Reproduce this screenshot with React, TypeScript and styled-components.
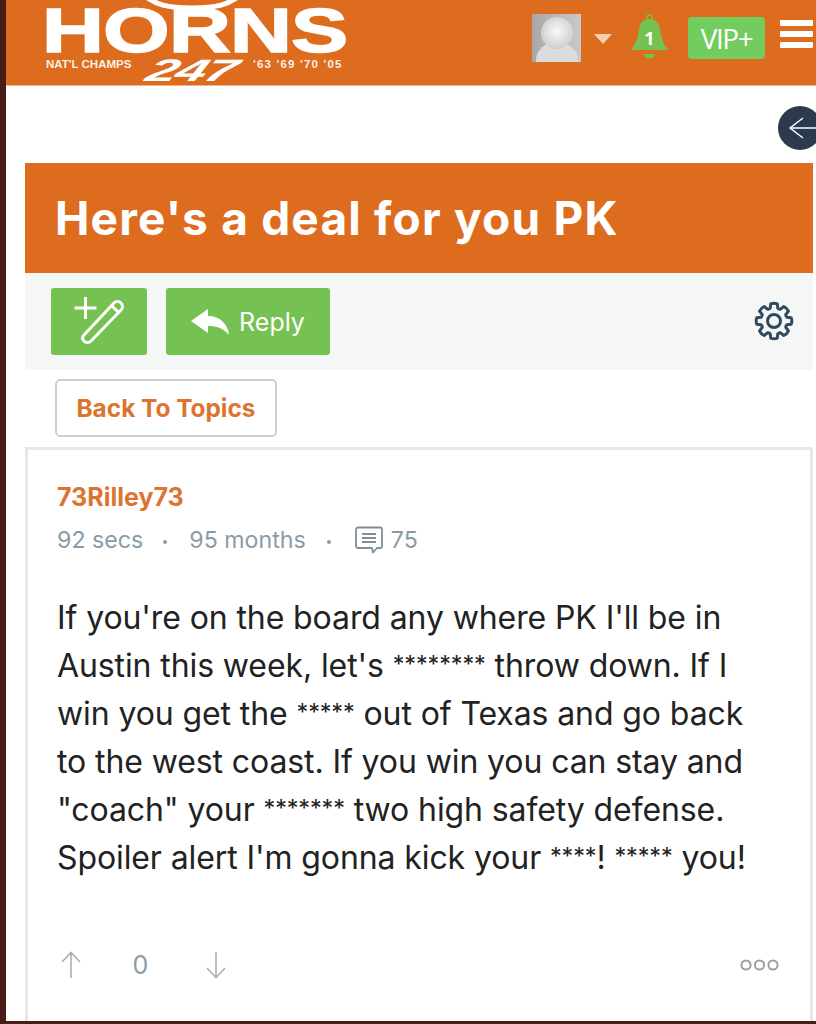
import React from "react";
import styled, { createGlobalStyle } from "styled-components";

const orange = "#de6c1f";
const green = "#75c252";
const grey = "#8a9ba8";

const Global = createGlobalStyle`
  html, body { margin: 0; padding: 0; background: #fff; }
  body { font-family: Inter, "Open Sans", sans-serif; }
  #root { width: 816px; height: 1024px; overflow: hidden; }
`;

const Page = styled.div`
  width: 816px;
  height: 1024px;
  box-sizing: border-box;
  border-left: 6px solid #4a1c17;
  border-bottom: 3px solid #4a1c17;
  overflow: hidden;
  background: #fff;
  display: flex;
  flex-direction: column;
`;

const Header = styled.header`
  flex: none;
  height: 86px;
  box-sizing: border-box;
  background: ${orange};
  border-bottom: 1px solid #eeb48a;
  display: flex;
  align-items: flex-start;
  padding-left: 40px;
`;

const Logo = styled.div`
  position: relative;
  width: 300px;
  height: 85px;
  color: #fff;
  display: flex;
  flex-direction: column;
`;

const Horn = styled.svg`
  position: absolute;
  left: 96px;
  top: 0;
`;

const Word = styled.div`
  font-family: "Liberation Sans", Arial, sans-serif;
  font-weight: 700;
  font-size: 63px;
  line-height: 45px;
  height: 45px;
  margin: 8px 0 0 -4px;
  white-space: nowrap;
  transform-origin: left center;
  transform: scaleX(1.36);
  letter-spacing: -0.6px;
  -webkit-text-stroke: 1.5px #fff;
`;

const LogoRow = styled.div`
  display: flex;
  align-items: flex-start;
  height: 26px;
  margin-top: 5px;
`;

const Tiny = styled.span<{ $w: number; $s: number }>`
  font-family: "Liberation Sans", Arial, sans-serif;
  font-weight: 700;
  font-size: 11.5px;
  line-height: 13px;
  width: ${(p) => p.$w}px;
  letter-spacing: ${(p) => p.$s}px;
  white-space: nowrap;
  opacity: 0.9;
`;

const Num = styled.span`
  font-family: "Liberation Sans", Arial, sans-serif;
  font-weight: 700;
  font-style: italic;
  font-size: 31px;
  line-height: 26px;
  width: 105px;
  white-space: nowrap;
  transform-origin: left center;
  transform: scaleX(1.78) skewX(-14deg);
  letter-spacing: -1px;
`;

const HeaderRight = styled.div`
  margin-left: auto;
  display: flex;
  align-items: flex-start;
  padding-right: 3px;
`;

const Avatar = styled.div`
  width: 49px;
  height: 48px;
  margin-top: 14px;
  background: #bdbdbd;
  overflow: hidden;
  flex: none;
`;

const Caret = styled.div`
  width: 0;
  height: 0;
  border-left: 9px solid transparent;
  border-right: 9px solid transparent;
  border-top: 10px solid #f8cfb3;
  margin: 34px 18px 0 13px;
`;

const Bell = styled.svg`
  margin-top: 14px;
  flex: none;
`;

const Vip = styled.div`
  width: 77px;
  height: 42px;
  margin: 17px 15px 0 19px;
  background: #72cc5e;
  border-radius: 4px;
  color: #fff;
  font-family: "Open Sans", sans-serif;
  font-size: 28px;
  letter-spacing: -1.5px;
  display: flex;
  align-items: center;
  justify-content: center;
`;

const Burger = styled.div`
  width: 33px;
  height: 28px;
  margin-top: 20px;
  display: flex;
  flex-direction: column;
  justify-content: space-between;
  span {
    display: block;
    height: 6px;
    background: #fff;
    border-radius: 1px;
  }
`;

const BackRow = styled.div`
  flex: none;
  height: 77px;
  display: flex;
  justify-content: flex-end;
  align-items: center;
`;

const BackCircle = styled.div`
  width: 44px;
  height: 44px;
  border-radius: 50%;
  background: #2b3a4c;
  margin-right: -6px;
  margin-top: 6px;
  flex: none;
  display: flex;
  align-items: center;
`;

const Main = styled.main`
  width: 788px;
  margin-left: 19px;
  display: flex;
  flex-direction: column;
`;

const TitleBar = styled.h1`
  margin: 0;
  height: 110px;
  background: ${orange};
  color: #fff;
  font-size: 46px;
  letter-spacing: 1.2px;
  font-weight: 700;
  display: flex;
  align-items: center;
  padding-left: 30px;
  white-space: nowrap;
`;

const Toolbar = styled.div`
  height: 97px;
  box-sizing: border-box;
  background: #f5f7f7;
  display: flex;
  align-items: flex-start;
  padding: 15px 19px 0 26px;
`;

const GreenButton = styled.button<{ $w: number }>`
  width: ${(p) => p.$w}px;
  height: 67px;
  margin-right: 19px;
  border: 0;
  border-radius: 3px;
  background: ${green};
  color: #fff;
  font-family: inherit;
  font-size: 25px;
  display: flex;
  align-items: center;
  justify-content: center;
  gap: 9px;
  padding: 0;
`;

const Gear = styled.svg`
  margin-left: auto;
  margin-top: 12px;
  margin-right: -1px;
  color: #2f4a5f;
  flex: none;
`;

const BackButton = styled.button`
  margin: 9px 0 10px 30px;
  width: 222px;
  height: 58px;
  box-sizing: border-box;
  border: 2px solid #cfcfcf;
  border-radius: 5px;
  background: #fff;
  color: #dc7430;
  font-family: inherit;
  font-weight: 700;
  font-size: 24.4px;
  padding: 0;
`;

const Card = styled.article`
  height: 600px;
  box-sizing: border-box;
  border: 3px solid #e6e8e8;
  border-bottom: 0;
  background: #fff;
  padding: 29px 28px 0 29px;
  display: flex;
  flex-direction: column;
`;

const Author = styled.div`
  color: #dc7430;
  font-weight: 700;
  font-size: 25px;
  line-height: 36px;
`;

const Meta = styled.div`
  margin-top: 7px;
  display: flex;
  align-items: center;
  color: ${grey};
  font-size: 23.2px;
  line-height: 36px;
  white-space: nowrap;
`;

const Dot = styled.span<{ $l: number; $r: number }>`
  width: 4px;
  height: 4px;
  border-radius: 50%;
  background: ${grey};
  margin: 4px ${(p) => p.$r}px 0 ${(p) => p.$l}px;
`;

const Body = styled.p`
  margin: 36px 0 0;
  color: #222;
  font-size: 32px;
  letter-spacing: -0.1px;
  line-height: 48px;
  white-space: nowrap;
`;

const Stars = styled.span`
  font-size: 23.4px;
  line-height: 1;
  vertical-align: 5px;
`;

const Actions = styled.div`
  margin-top: auto;
  margin-bottom: 67px;
  padding-left: 4px;
  display: flex;
  align-items: center;
  color: ${grey};
  font-size: 25px;
`;

const Score = styled.span`
  width: 27px;
  margin: 0 52px 0 46px;
  text-align: center;
`;

const More = styled.svg`
  margin-left: auto;
  margin-right: 3px;
`;

function gearPath(cx: number, cy: number, outer: number, inner: number, teeth: number) {
  const pt = (r: number, a: number) =>
    `${(cx + r * Math.cos(a)).toFixed(2)} ${(cy + r * Math.sin(a)).toFixed(2)}`;
  const step = (Math.PI * 2) / teeth;
  let d = "";
  for (let i = 0; i < teeth; i++) {
    const a = i * step - Math.PI / 2;
    const w = step * 0.24;
    d += i === 0 ? `M${pt(outer, a - w)}` : `L${pt(outer, a - w)}`;
    d += `Q${pt(outer + 1, a)} ${pt(outer, a + w)}`;
    d += `L${pt(inner, a + step * 0.36)}`;
    d += `Q${pt(inner - 1, a + step / 2)} ${pt(inner, a + step * 0.64)}`;
  }
  return d + "Z";
}

function HornMark() {
  return (
    <Horn width="110" height="14" viewBox="0 0 110 14" fill="none">
      <path d="M4 -3 C14 4 24 8 50 8 C76 8 86 4 96 -3" stroke="#fff" strokeWidth="5" />
    </Horn>
  );
}

function AvatarPic() {
  return (
    <Avatar>
      <svg width="49" height="48" viewBox="0 0 49 48">
        <defs>
          <radialGradient id="head" cx="0.5" cy="0.45" r="0.6">
            <stop offset="0" stopColor="#fafafa" />
            <stop offset="1" stopColor="#c9c9c9" />
          </radialGradient>
          <linearGradient id="bg" x1="0" x2="1" y1="0" y2="0">
            <stop offset="0" stopColor="#a8a8a8" />
            <stop offset="1" stopColor="#c9c9c9" />
          </linearGradient>
        </defs>
        <rect width="49" height="48" fill="url(#bg)" />
        <ellipse cx="25" cy="46" rx="21" ry="18" fill="#dcdcdc" />
        <circle cx="25" cy="19" r="16" fill="url(#head)" />
      </svg>
    </Avatar>
  );
}

export default function App() {
  return (
    <Page>
      <Global />
      <Header>
        <Logo>
          <HornMark />
          <Word>HORNS</Word>
          <LogoRow>
            <Tiny $w={102} $s={0}>NAT'L CHAMPS</Tiny>
            <Num>247</Num>
            <Tiny $w={92} $s={1.2}>'63 '69 '70 '05</Tiny>
          </LogoRow>
        </Logo>
        <HeaderRight>
          <AvatarPic />
          <Caret />
          <Bell width="39" height="48" viewBox="0 0 39 48">
            <circle cx="19.5" cy="3.5" r="2.5" fill="none" stroke="#75c252" strokeWidth="1.5" />
            <path d="M19.5 5 C12 5 9.5 10 8.5 18 C7.5 27 4 32 0.5 36 H38.5 C35 32 31.5 27 30.5 18 C29.5 10 27 5 19.5 5 Z" fill="#75c252" />
            <path d="M14 40 H25 C24.5 46 14.5 46 14 40 Z" fill="#75c252" />
            <text x="19.5" y="31" textAnchor="middle" fill="#fff" fontFamily="Open Sans, sans-serif" fontWeight="700" fontSize="18">1</text>
          </Bell>
          <Vip>VIP+</Vip>
          <Burger>
            <span />
            <span />
            <span />
          </Burger>
        </HeaderRight>
      </Header>
      <BackRow>
        <BackCircle>
          <svg width="28" height="30" viewBox="0 0 28 30" fill="none" stroke="#fff" strokeWidth="1.5" style={{ marginLeft: 10 }}>
            <path d="M15 5 L2 15 L15 25 M2 15 H28" />
          </svg>
        </BackCircle>
      </BackRow>
      <Main>
        <TitleBar>Here's a deal for you PK</TitleBar>
        <Toolbar>
          <GreenButton $w={96} aria-label="New topic">
            <svg width="52" height="50" viewBox="0 0 52 50" fill="none" stroke="#fff" strokeWidth="3" strokeLinejoin="round">
              <path d="M1.5 11 H23.5 M12.5 0 V22" />
              <path transform="translate(5 -3)" d="M6 41 L36 9 C38 7 41 7 43 9 C45 11 45 14 43 16 L13 47 C11 49 8 49 6 47 C4 45 4 43 6 41 Z" />
              <path transform="translate(5 -3)" d="M34 12 L40 18" />
            </svg>
          </GreenButton>
          <GreenButton $w={164}>
            <svg width="39" height="26" viewBox="0 0 39 26" fill="#fff">
              <path d="M0 12 L17 0 V7 C29 7 37 15 38 26 C32 19 26 17 17 17 V24 Z" />
            </svg>
            Reply
          </GreenButton>
          <Gear width="42" height="42" viewBox="0 0 42 42" fill="none" stroke="currentColor" strokeWidth="3" strokeLinejoin="round">
            <path d={gearPath(21, 21, 17.5, 13.5, 8)} />
            <circle cx="21" cy="21" r="6.5" />
          </Gear>
        </Toolbar>
        <BackButton>Back To Topics</BackButton>
        <Card>
          <Author>73Rilley73</Author>
          <Meta>
            92 secs
            <Dot $l={20} $r={22} />
            95 months
            <Dot $l={21} $r={24} />
            <svg width="28" height="28" viewBox="0 0 28 28" fill="none" stroke="#7d8e9b" strokeWidth="1.8" strokeLinejoin="round" style={{ marginRight: 8 }}>
              <path d="M3 1.5 H25 C26 1.5 27 2.5 27 3.5 V20 C27 21 26 22 25 22 H22 L18 26.5 L17 22 H3 C2 22 1 21 1 20 V3.5 C1 2.5 2 1.5 3 1.5 Z" />
              <path d="M7 8 H21 M7 12 H21 M7 16 H21" />
            </svg>
            75
          </Meta>
          <Body>
            If you're on the board any where PK I'll be in
            <br />
            Austin this week, let's <Stars>********</Stars> throw down. If I
            <br />
            win you get the <Stars>*****</Stars> out of Texas and go back
            <br />
            to the west coast. If you win you can stay and
            <br />
            "coach" your <Stars>*******</Stars> two high safety defense.
            <br />
            Spoiler alert I'm gonna kick your <Stars>****</Stars>! <Stars>*****</Stars> you!
          </Body>
          <Actions>
            <svg width="20" height="28" viewBox="0 0 20 28" fill="none" stroke="#a9b0b4" strokeWidth="1.6">
              <path d="M1 11 L10 1.5 L19 11 M10 1.5 V27" />
            </svg>
            <Score>0</Score>
            <svg width="20" height="28" viewBox="0 0 20 28" fill="none" stroke="#a9b0b4" strokeWidth="1.6">
              <path d="M1 17 L10 26.5 L19 17 M10 26.5 V1" />
            </svg>
            <More width="39" height="12" viewBox="0 0 39 12" fill="none" stroke="#9a9fa3" strokeWidth="2">
              <circle cx="6" cy="6" r="4.6" />
              <circle cx="19.5" cy="6" r="4.6" />
              <circle cx="33" cy="6" r="4.6" />
            </More>
          </Actions>
        </Card>
      </Main>
    </Page>
  );
}
